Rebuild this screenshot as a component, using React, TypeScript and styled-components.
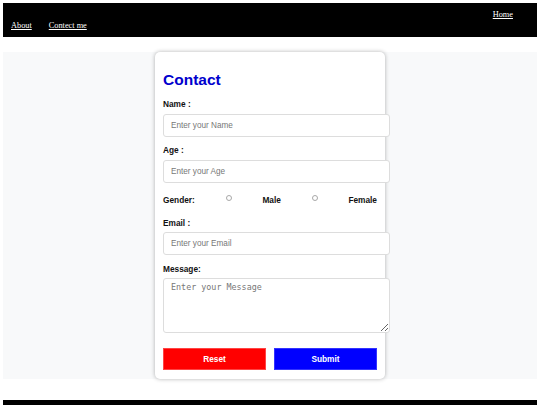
import React from "react";
import styled, { createGlobalStyle } from "styled-components";

const Global = createGlobalStyle`
  html, body { margin: 0; padding: 0; background: #fff; }
  body { margin: 3px; font-family: "Liberation Serif", "Times New Roman", serif; }
  * { font-synthesis: none; }
`;

const Header = styled.header`
  display: flex;
  justify-content: space-between;
  height: 34px;
  padding: 0 24px 0 8px;
  background: #000;
`;

const LeftNav = styled.nav`
  display: flex;
  align-self: flex-end;
  gap: 17px;
  padding-bottom: 6px;
`;

const RightNav = styled.nav`
  display: flex;
  align-self: flex-start;
  padding-top: 7px;
`;

const NavLink = styled.a`
  color: #fff;
  font-family: "Liberation Serif", "Times New Roman", serif;
  font-size: 8.3px;
  line-height: 10px;
  text-decoration: underline;
`;

const Section = styled.section`
  margin-top: 15px;
  background: #f8f9fa;
  display: flex;
  justify-content: center;
`;

const Card = styled.form`
  width: 214px;
  padding: 18px 8px 9px;
  background: #fff;
  border-radius: 5px;
  box-shadow: 0 0 4px rgba(0, 0, 0, 0.3);
  display: flex;
  flex-direction: column;
  font-family: "Liberation Sans", Arial, sans-serif;
`;

const Title = styled.h2`
  margin: 0 0 9px;
  font-size: 15.5px;
  line-height: 20px;
  font-weight: 700;
  color: #0000cd;
`;

const Label = styled.label`
  display: block;
  margin-bottom: 3.5px;
  font-size: 8.3px;
  line-height: 11px;
  font-weight: 700;
  color: #111;
`;

const Field = styled.div<{ $gap?: number }>`
  margin-bottom: ${(p) => p.$gap ?? 8.5}px;
`;

const TextInput = styled.input`
  display: block;
  width: 100%;
  height: 21px;
  padding: 0 4px 0 7px;
  border: 1px solid #ddd;
  border-radius: 3px;
  background: #fff;
  font-family: "Liberation Sans", Arial, sans-serif;
  font-size: 8.2px;
  outline: none;
  &::placeholder { color: #777; }
`;

const TextArea = styled.textarea`
  display: block;
  width: 100%;
  height: 49px;
  padding: 3px 4px 1px 7px;
  margin: 0;
  border: 1px solid #ddd;
  border-radius: 3px;
  background: #fff;
  font-family: "DejaVu Sans Mono", "Liberation Mono", monospace;
  font-size: 8.4px;
  line-height: 10px;
  outline: none;
  &::placeholder { color: #777; }
`;

const GenderRow = styled.div`
  display: flex;
  justify-content: space-between;
  align-items: center;
  height: 12px;
  margin: 11px 0 12px;
  font-size: 8.3px;
  font-weight: 700;
  color: #111;
`;

const Radio = styled.input`
  appearance: none;
  width: 6px;
  height: 6px;
  margin: 0 0 4px;
  border: 1px solid #a8a8a8;
  border-radius: 50%;
  background: #fff;
`;

const Buttons = styled.div`
  display: flex;
  gap: 8px;
  margin-top: 15px;
`;

const Button = styled.button<{ $color: string; $border: string }>`
  flex: 1;
  height: 22px;
  padding: 0;
  border: 1px solid ${(p) => p.$border};
  background: ${(p) => p.$color};
  color: #fff;
  font-family: "Liberation Sans", Arial, sans-serif;
  font-size: 8.3px;
  font-weight: 700;
`;

const Footer = styled.footer`
  margin-top: 21px;
  height: 40px;
  background: #000;
`;

export default function App() {
  return (
    <>
      <Global />
      <Header>
        <LeftNav>
          <NavLink href="#">About</NavLink>
          <NavLink href="#">Contect me</NavLink>
        </LeftNav>
        <RightNav>
          <NavLink href="#">Home</NavLink>
        </RightNav>
      </Header>
      <Section>
        <Card onSubmit={(e) => e.preventDefault()}>
          <Title>Contact</Title>
          <Field>
            <Label>Name :</Label>
            <TextInput placeholder="Enter your Name" />
          </Field>
          <Field $gap={0}>
            <Label>Age :</Label>
            <TextInput placeholder="Enter your Age" />
          </Field>
          <GenderRow>
            <span>Gender:</span>
            <Radio type="radio" name="g" />
            <span>Male</span>
            <Radio type="radio" name="g" />
            <span>Female</span>
          </GenderRow>
          <Field>
            <Label>Email :</Label>
            <TextInput placeholder="Enter your Email" />
          </Field>
          <Field $gap={0}>
            <Label>Message:</Label>
            <TextArea placeholder="Enter your Message" />
          </Field>
          <Buttons>
            <Button type="reset" $color="#ff0000" $border="#f44">Reset</Button>
            <Button type="submit" $color="#0000ff" $border="#33f">Submit</Button>
          </Buttons>
        </Card>
      </Section>
      <Footer />
    </>
  );
}
